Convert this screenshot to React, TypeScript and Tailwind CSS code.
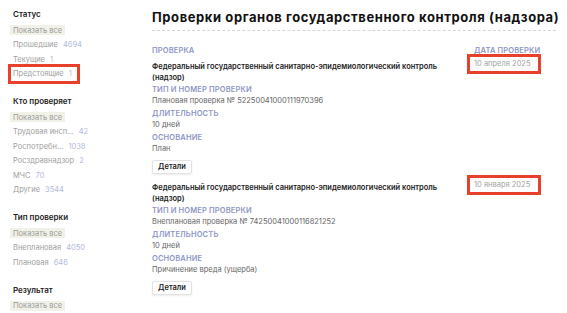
import React from 'react';

type FilterItem = { label: string; count?: string; marked?: boolean };

const groups: { title: string; items: FilterItem[] }[] = [
  {
    title: 'Статус',
    items: [
      { label: 'Прошедшие', count: '4694' },
      { label: 'Текущие', count: '1' },
      { label: 'Предстоящие', count: '1', marked: true },
    ],
  },
  {
    title: 'Кто проверяет',
    items: [
      { label: 'Трудовая инсп...', count: '42' },
      { label: 'Роспотребн...', count: '1038' },
      { label: 'Росздравнадзор', count: '2' },
      { label: 'МЧС', count: '70' },
      { label: 'Другие', count: '3544' },
    ],
  },
  {
    title: 'Тип проверки',
    items: [
      { label: 'Внеплановая', count: '4050' },
      { label: 'Плановая', count: '646' },
    ],
  },
  { title: 'Результат', items: [] },
];

const checks = [
  {
    title: 'Федеральный государственный санитарно-эпидемиологический контроль (надзор)',
    date: '10 апреля 2025',
    number: 'Плановая проверка № 52250041000111970396',
    duration: '10 дней',
    reason: 'План',
  },
  {
    title: 'Федеральный государственный санитарно-эпидемиологический контроль (надзор)',
    date: '10 января 2025',
    number: 'Внеплановая проверка № 74250041000116821252',
    duration: '10 дней',
    reason: 'Причинение вреда (ущерба)',
  },
];

function Label({ children }: { children: React.ReactNode }) {
  return (
    <p className="text-[7.5px] leading-[11px] font-semibold uppercase tracking-[0.02em] text-[#8e96c6]">
      {children}
    </p>
  );
}

function Sidebar() {
  return (
    <aside className="w-[140px] shrink-0 pl-[13px] pt-[8px]">
      {groups.map((group) => (
        <div key={group.title} className="mb-[14px] flex flex-col">
          <h3 className="h-[12px] text-[8px] leading-[12px] font-semibold text-[#222]">{group.title}</h3>
          <div className="mt-[3px] h-[14.5px] flex items-center">
            <span className="-ml-[3px] px-[3px] h-[10px] flex items-center bg-[#f1f1e8] text-[7.5px] text-[#9a9a9a]">
              Показать все
            </span>
          </div>
          {group.items.map((item) => (
            <div key={item.label} className="h-[14.5px] flex items-center">
              <span
                className={
                  item.marked
                    ? '-ml-[5px] h-[20px] w-[72px] flex items-center gap-[5px] border-[3px] border-[#e8402b] pl-[2px] text-[7.5px]'
                    : 'flex items-center gap-[5px] text-[7.5px]'
                }
              >
                <span className="text-[#a0a0a0]">{item.label}</span>
                <span className="text-[#b3badc]">{item.count}</span>
              </span>
            </div>
          ))}
        </div>
      ))}
    </aside>
  );
}

export default function App() {
  return (
    <div className="w-[567px] h-[313px] overflow-hidden bg-white flex" style={{ fontFamily: 'Inter, "Noto Sans", sans-serif' }}>
      <Sidebar />
      <main className="flex-1 min-w-0 pl-[12px] pr-[11px] pt-[8px]">
        <h1 className="text-[13px] leading-[18px] font-bold tracking-[0.045em] text-[#111] whitespace-nowrap">
          Проверки органов государственного контроля (надзора)
        </h1>
        <div className="mt-[4px] border-b border-dashed border-[#d6d6d6]" />

        <div className="mt-[14px] flex flex-col gap-[3px] pr-[15px]">
          {checks.map((c, i) => (
            <div key={c.number}>
              {i === 0 && (
                <div className="flex justify-between">
                  <Label>Проверка</Label>
                  <div className="w-[67px]">
                    <Label>Дата проверки</Label>
                  </div>
                </div>
              )}
              <div className="mt-[5px] flex justify-between">
                <p className="w-[300px] text-[7.5px] leading-[11px] font-semibold text-[#222]">{c.title}</p>
                <div className="w-[67px]">
                  <span className="-ml-[7px] -mt-[7px] h-[20px] w-[74px] flex items-center border-[3px] border-[#e8402b] pl-[4px] text-[7.5px] text-[#a3a3a3]">
                    {c.date}
                  </span>
                </div>
              </div>
              <div className="mt-[1px]">
                <Label>Тип и номер проверки</Label>
                <p className="text-[7.5px] leading-[11px] text-[#666]">{c.number}</p>
              </div>
              <div className="mt-[2px]">
                <Label>Длительность</Label>
                <p className="text-[7.5px] leading-[11px] text-[#666]">{c.duration}</p>
              </div>
              <div className="mt-[2px]">
                <Label>Основание</Label>
                <p className="text-[7.5px] leading-[11px] text-[#666]">{c.reason}</p>
              </div>
              <button className="block mt-[6px] h-[14px] w-[40px] rounded-[2px] border border-[#e2e2e2] bg-white shadow-[0_1px_2px_rgba(0,0,0,0.08)] text-[7.5px] font-semibold text-[#222]">
                Детали
              </button>
            </div>
          ))}
        </div>
      </main>
    </div>
  );
}
